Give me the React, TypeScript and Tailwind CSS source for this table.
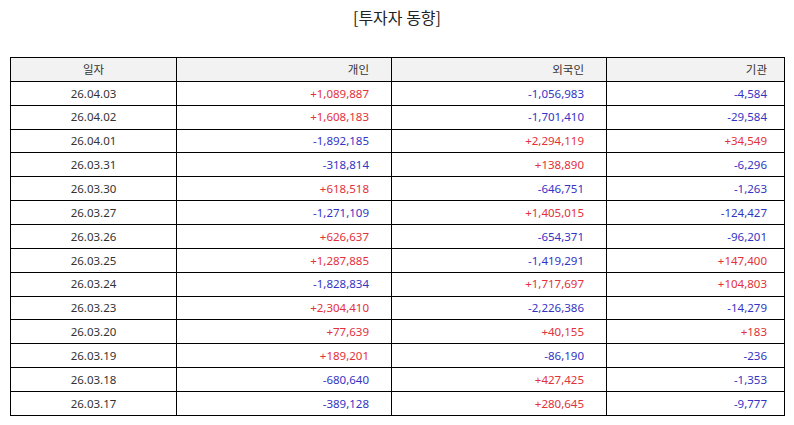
import React from "react";

const rows: [string, string, string, string][] = [
  ["26.04.03", "+1,089,887", "-1,056,983", "-4,584"],
  ["26.04.02", "+1,608,183", "-1,701,410", "-29,584"],
  ["26.04.01", "-1,892,185", "+2,294,119", "+34,549"],
  ["26.03.31", "-318,814", "+138,890", "-6,296"],
  ["26.03.30", "+618,518", "-646,751", "-1,263"],
  ["26.03.27", "-1,271,109", "+1,405,015", "-124,427"],
  ["26.03.26", "+626,637", "-654,371", "-96,201"],
  ["26.03.25", "+1,287,885", "-1,419,291", "+147,400"],
  ["26.03.24", "-1,828,834", "+1,717,697", "+104,803"],
  ["26.03.23", "+2,304,410", "-2,226,386", "-14,279"],
  ["26.03.20", "+77,639", "+40,155", "+183"],
  ["26.03.19", "+189,201", "-86,190", "-236"],
  ["26.03.18", "-680,640", "+427,425", "-1,353"],
  ["26.03.17", "-389,128", "+280,645", "-9,777"],
];

const color = (v: string) => (v.startsWith("+") ? "text-[#e3303a]" : "text-[#3434c4]");

export default function App() {
  return (
    <div
      className="w-[794px] h-[425px] bg-white text-[#333]"
      style={{ fontFamily: '"Noto Sans", "Noto Sans CJK KR", sans-serif' }}
    >
      <h1
        className="pt-[5px] text-center text-[16px] leading-[24px] text-[#222] font-normal"
        style={{ fontFamily: '"Noto Sans CJK KR", sans-serif' }}
      >
        [투자자 동향]
      </h1>
      <div className="pl-[10px] pt-[28px]">
        <table className="w-[774px] border-collapse table-fixed text-[11.5px] leading-none border border-black">
          <colgroup>
            <col className="w-[166px]" />
            <col className="w-[215px]" />
            <col className="w-[215px]" />
            <col className="w-[178px]" />
          </colgroup>
          <thead>
            <tr className="h-[23.87px] bg-[#f2f2f2]">
              <th className="border border-black font-normal text-center p-0">일자</th>
              <th className="border border-black font-normal text-right p-0 pr-[22px]">개인</th>
              <th className="border border-black font-normal text-right p-0 pr-[22px]">외국인</th>
              <th className="border border-black font-normal text-right p-0 pr-[17px]">기관</th>
            </tr>
          </thead>
          <tbody>
            {rows.map((r) => (
              <tr key={r[0]} className="h-[23.87px]">
                <td className="border border-black text-center p-0">{r[0]}</td>
                <td className={`border border-black text-right p-0 pr-[22px] ${color(r[1])}`}>{r[1]}</td>
                <td className={`border border-black text-right p-0 pr-[22px] ${color(r[2])}`}>{r[2]}</td>
                <td className={`border border-black text-right p-0 pr-[17px] ${color(r[3])}`}>{r[3]}</td>
              </tr>
            ))}
          </tbody>
        </table>
      </div>
    </div>
  );
}
